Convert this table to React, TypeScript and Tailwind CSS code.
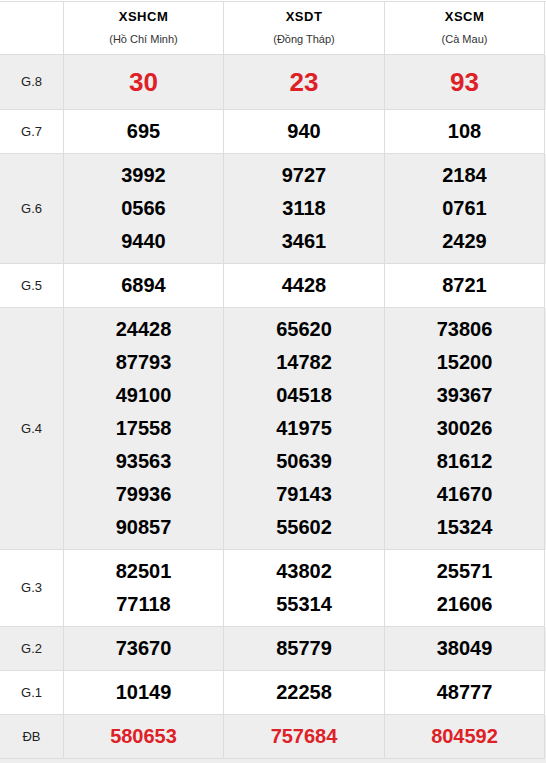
import React from "react";

type Row = {
  label: string;
  gray: boolean;
  kind?: "big" | "special";
  values: string[][];
};

const rows: Row[] = [
  { label: "G.8", gray: true, kind: "big", values: [["30"], ["23"], ["93"]] },
  { label: "G.7", gray: false, values: [["695"], ["940"], ["108"]] },
  {
    label: "G.6",
    gray: true,
    values: [
      ["3992", "0566", "9440"],
      ["9727", "3118", "3461"],
      ["2184", "0761", "2429"],
    ],
  },
  { label: "G.5", gray: false, values: [["6894"], ["4428"], ["8721"]] },
  {
    label: "G.4",
    gray: true,
    values: [
      ["24428", "87793", "49100", "17558", "93563", "79936", "90857"],
      ["65620", "14782", "04518", "41975", "50639", "79143", "55602"],
      ["73806", "15200", "39367", "30026", "81612", "41670", "15324"],
    ],
  },
  {
    label: "G.3",
    gray: false,
    values: [
      ["82501", "77118"],
      ["43802", "55314"],
      ["25571", "21606"],
    ],
  },
  { label: "G.2", gray: true, values: [["73670"], ["85779"], ["38049"]] },
  { label: "G.1", gray: false, values: [["10149"], ["22258"], ["48777"]] },
  { label: "ĐB", gray: true, kind: "special", values: [["580653"], ["757684"], ["804592"]] },
];

const provinces = [
  { code: "XSHCM", name: "(Hồ Chí Minh)" },
  { code: "XSDT", name: "(Đồng Tháp)" },
  { code: "XSCM", name: "(Cà Mau)" },
];

const gridCols = "grid grid-cols-[64px_160px_161px_160px]";

export default function App() {
  return (
    <div className="w-[546px] bg-white pt-px font-['Liberation_Sans',Arial,sans-serif]">
      <div className="border-t border-[#dddddd]">
        {/* header */}
        <div className={gridCols}>
          <div className="border-r border-b border-[#dddddd]" />
          {provinces.map((p) => (
            <div
              key={p.code}
              className="flex h-[53px] flex-col items-center border-r border-b border-[#dddddd] pt-[5px]"
            >
              <div className="text-[13px] font-bold leading-[20px] tracking-[0.5px] text-black">
                {p.code}
              </div>
              <div className="mt-[3px] text-[11px] leading-[18px] text-[#333]">{p.name}</div>
            </div>
          ))}
        </div>

        {rows.map((r) => (
          <div key={r.label} className={`${gridCols} ${r.gray ? "bg-[#eeeeee]" : "bg-white"}`}>
            <div className="flex items-center justify-center border-r border-b border-[#dddddd] text-[13px] text-[#222]">
              {r.label}
            </div>
            {r.values.map((col, i) => (
              <div
                key={i}
                className="flex flex-col items-center border-r border-b border-[#dddddd] py-[5px]"
              >
                {col.map((n) => (
                  <div
                    key={n}
                    className={
                      r.kind === "big"
                        ? "text-[26px] font-bold leading-[44px] text-[#de2027]"
                        : r.kind === "special"
                        ? "text-[20px] font-bold leading-[33px] text-[#de2027]"
                        : "text-[20px] font-bold leading-[33px] text-black"
                    }
                  >
                    {n}
                  </div>
                ))}
              </div>
            ))}
          </div>
        ))}
      </div>
      <div className="h-[4px] bg-[#eeeeee]" />
    </div>
  );
}
